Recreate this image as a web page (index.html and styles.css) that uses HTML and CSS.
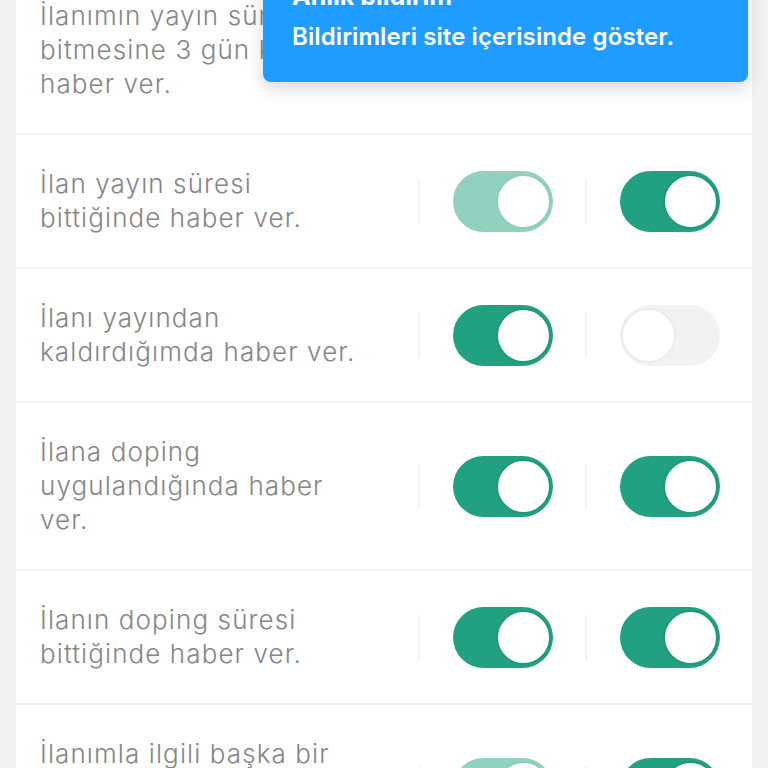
FILE: index.html
```html
<!DOCTYPE html>
<html lang="tr">
<head>
<meta charset="utf-8">
<title>Bildirim ayarları</title>
<link rel="stylesheet" href="styles.css">
</head>
<body>
<div class="page">
  <div class="list">
    <div class="row">
      <div class="label">İlanımın yayın süresi bitmesine 3 gün kala haber ver.</div>
      <div class="group"><span class="sep"></span><span class="toggle on"><span class="knob"></span></span></div>
      <div class="group"><span class="sep"></span><span class="toggle on"><span class="knob"></span></span></div>
    </div>
    <div class="row">
      <div class="label">İlan yayın süresi bittiğinde haber ver.</div>
      <div class="group"><span class="sep"></span><span class="toggle pale"><span class="knob"></span></span></div>
      <div class="group"><span class="sep"></span><span class="toggle on"><span class="knob"></span></span></div>
    </div>
    <div class="row">
      <div class="label">İlanı yayından kaldırdığımda haber ver.</div>
      <div class="group"><span class="sep"></span><span class="toggle on"><span class="knob"></span></span></div>
      <div class="group"><span class="sep"></span><span class="toggle off"><span class="knob"></span></span></div>
    </div>
    <div class="row">
      <div class="label">İlana doping uygulandığında haber ver.</div>
      <div class="group"><span class="sep"></span><span class="toggle on"><span class="knob"></span></span></div>
      <div class="group"><span class="sep"></span><span class="toggle on"><span class="knob"></span></span></div>
    </div>
    <div class="row">
      <div class="label">İlanın doping süresi bittiğinde haber ver.</div>
      <div class="group"><span class="sep"></span><span class="toggle on"><span class="knob"></span></span></div>
      <div class="group"><span class="sep"></span><span class="toggle on"><span class="knob"></span></span></div>
    </div>
    <div class="row">
      <div class="label">İlanımla ilgili başka bir gelişme olduğunda haber ver.</div>
      <div class="group"><span class="sep"></span><span class="toggle pale"><span class="knob"></span></span></div>
      <div class="group"><span class="sep"></span><span class="toggle on"><span class="knob"></span></span></div>
    </div>
  </div>

  <div class="toast">
    <div class="toast-title">Anlık bildirim</div>
    <div class="toast-close">×</div>
    <div class="toast-body">Bildirimleri site içerisinde göster.</div>
  </div>
</div>
</body>
</html>
```
FILE: styles.css
```css
html, body {
  margin: 0;
  padding: 0;
  background: #f2f2f2;
  height: 768px;
  overflow: hidden;
}

.page {
  position: relative;
  width: 768px;
  height: 768px;
  overflow: hidden;
  font-family: "Inter", "Noto Sans", sans-serif;
}

.list {
  margin: -33px 16px 0 16px;
  display: flex;
  flex-direction: column;
  gap: 2px;
}

.row {
  background: #ffffff;
  display: flex;
  align-items: center;
  padding: 32px 0 32px 24px;
}

.label {
  flex: 1;
  font-size: 26px;
  line-height: 34px;
  font-weight: 300;
  letter-spacing: 1.1px;
  color: #858585;
  padding-right: 52px;
}

.group {
  width: 167px;
  display: flex;
  align-items: center;
  box-sizing: border-box;
  padding-right: 32px;
}

.sep {
  width: 2px;
  height: 45px;
  background: #f3f3f3;
  margin-right: 33px;
}

.toggle {
  position: relative;
  width: 100px;
  height: 61px;
  border-radius: 31px;
  box-sizing: border-box;
  display: flex;
  align-items: center;
}

.knob {
  position: absolute;
  top: 3px;
  width: 51px;
  height: 51px;
  border-radius: 50%;
  background: #ffffff;
}

.toggle.on {
  background: #21a181;
}
.toggle.on .knob {
  right: 2px;
  border: 2px solid #1e9a7a;
}

.toggle.pale {
  background: #92d1bf;
}
.toggle.pale .knob {
  right: 2px;
  border: 2px solid #8ccdbb;
}

.toggle.off {
  background: #f2f2f2;
}
.toggle.off .knob {
  left: 1px;
  border: 2px solid #ececec;
}

.toast {
  position: absolute;
  left: 263px;
  top: -38px;
  width: 485px;
  height: 120px;
  box-sizing: border-box;
  padding: 20px 29px 0 29px;
  background: #1f9cff;
  border-radius: 8px;
  box-shadow: 0 6px 18px rgba(0, 0, 0, 0.16);
  color: #ffffff;
  font-family: "Inter", "Noto Sans", sans-serif;
}

.toast-title {
  font-size: 25px;
  line-height: 28px;
  font-weight: 700;
}

.toast-close {
  position: absolute;
  right: 28px;
  top: 8px;
  font-size: 30px;
  line-height: 30px;
  font-weight: 300;
  opacity: 0.8;
}

.toast-body {
  margin-top: 13px;
  font-size: 24px;
  line-height: 28px;
  font-weight: 600;
  letter-spacing: 0.1px;
}
```
